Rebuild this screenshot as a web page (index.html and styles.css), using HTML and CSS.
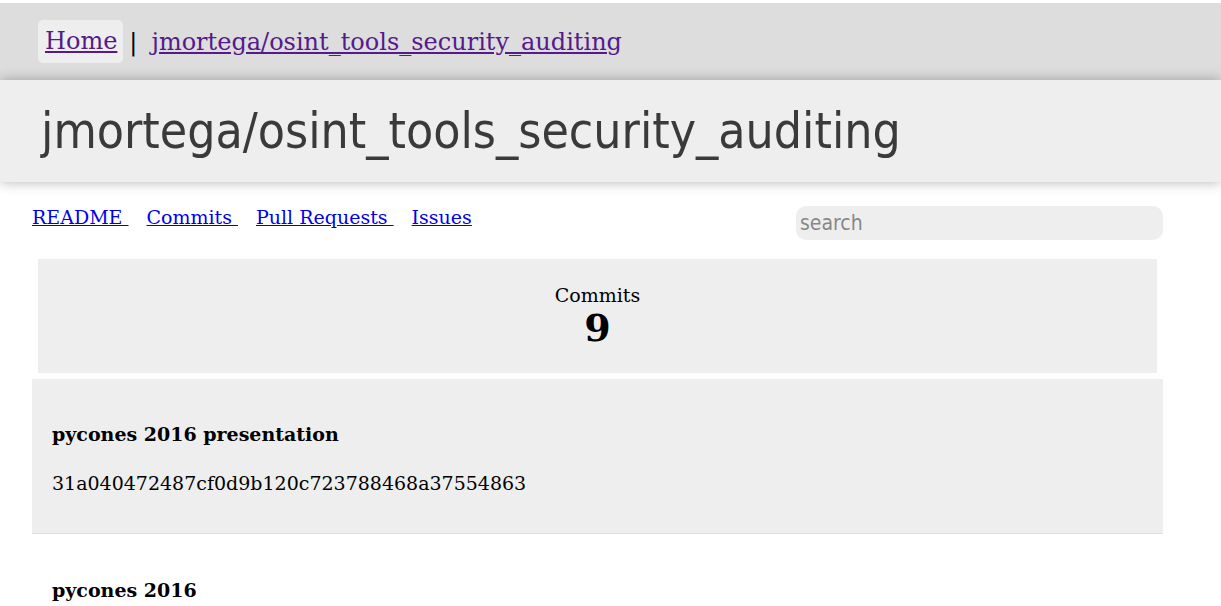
FILE: index.html
```html
<!DOCTYPE html>
<html>
<head>
<meta charset="utf-8">
<title>jmortega/osint_tools_security_auditing</title>
<link rel="stylesheet" href="styles.css">
</head>
<body>
<nav class="topnav">
  <a class="crumb home" href="#">Home</a>
  <span class="sep">|</span>
  <a class="crumb" href="#">jmortega/osint_tools_security_auditing</a>
</nav>
<header class="repo-header">
  <h1 class="repo-title">jmortega/osint_tools_security_auditing</h1>
</header>
<main class="content">
  <div class="toolbar">
    <div class="tabs">
      <a class="tab" href="#">README </a>
      <a class="tab" href="#">Commits </a>
      <a class="tab" href="#">Pull Requests </a>
      <a class="tab" href="#">Issues</a>
    </div>
    <input class="search" type="text" placeholder="search">
  </div>
  <section class="stat">
    <div class="stat-label">Commits</div>
    <div class="stat-value">9</div>
  </section>
  <article class="commit odd">
    <h4 class="commit-title">pycones 2016 presentation</h4>
    <p class="commit-hash">31a040472487cf0d9b120c723788468a37554863</p>
  </article>
  <article class="commit">
    <h4 class="commit-title">pycones 2016</h4>
    <p class="commit-hash">0c2b1b1d0e0d1f9a6f0f5f8e0c3d2a7b9e4c6a12</p>
  </article>
</main>
</body>
</html>
```

FILE: styles.css
```css
html, body {
  margin: 0;
  padding: 0;
  background: #fff;
}
body {
  font-family: "DejaVu Serif", serif;
  font-size: 19px;
  color: #000;
  padding-top: 3px;
}
.topnav {
  background: #ddd;
  height: 77px;
  display: flex;
  align-items: center;
  padding-left: 38px;
  font-size: 24px;
}
.crumb {
  color: #551a8b;
}
.home {
  background: #eee;
  border-radius: 5px;
  padding: 7px 6px 8px 7px;
}
.sep {
  margin: 0 14px 0 6px;
}
.repo-header {
  position: relative;
  background: #eee;
  height: 102px;
  box-shadow: 0 0 12px rgba(0, 0, 0, 0.3);
  display: flex;
  align-items: center;
  padding-left: 41px;
}
.repo-title {
  margin: 0;
  font-family: "DejaVu Sans", sans-serif;
  font-stretch: condensed;
  font-weight: normal;
  font-size: 49.5px;
  color: #3a3a3a;
}
.content {
  margin: 0 58px 0 32px;
}
.toolbar {
  display: flex;
  justify-content: space-between;
  align-items: flex-start;
  padding-top: 6px;
}
.tabs {
  display: flex;
  gap: 18px;
  white-space: pre;
  margin-top: 17px;
}
.tab {
  color: #0000ee;
  line-height: 24px;
}
.search {
  width: 367px;
  height: 34px;
  box-sizing: border-box;
  margin-top: 18px;
  border: none;
  border-radius: 10px;
  background: #eee;
  padding: 0 4px;
  font-family: "DejaVu Sans", sans-serif;
  font-stretch: condensed;
  font-size: 21px;
  color: #333;
}
.search::placeholder {
  color: #888;
}
.stat {
  margin: 19px 6px 6px 6px;
  background: #eee;
  height: 114px;
  display: flex;
  flex-direction: column;
  align-items: center;
  justify-content: center;
  padding-top: 1px;
  padding-bottom: 2px;
  box-sizing: border-box;
}
.stat-label {
  line-height: 24px;
}
.stat-value {
  font-weight: bold;
  font-size: 38px;
  line-height: 42px;
}
.commit {
  padding: 20px;
  border-bottom: 1px solid #ddd;
}
.commit.odd {
  background: #eee;
}
.commit-title {
  margin: 24px 0 27px;
  font-size: 19px;
  line-height: 22px;
}
.commit-hash {
  margin: 0 0 19px;
  font-size: 19px;
  line-height: 22px;
}
.commit + .commit .commit-title {
  margin-top: 25px;
}
```
